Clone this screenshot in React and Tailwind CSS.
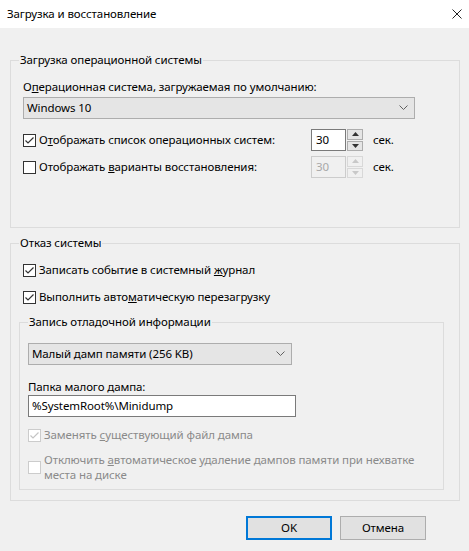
import React from 'react';

const font = { fontFamily: '"Noto Sans", "Segoe UI", sans-serif' };

function Check({ checked, disabled }) {
  const c = disabled ? '#c4c4c4' : '#333333';
  return (
    <span
      className={`w-[13px] h-[13px] shrink-0 border bg-white flex items-center justify-center ${
        disabled ? 'border-[#cccccc]' : 'border-[#333333]'
      }`}
    >
      {checked && (
        <svg width="11" height="11" viewBox="0 0 11 11">
          <polyline points="1.5,5.5 4,8 9.5,2.5" fill="none" stroke={c} strokeWidth="1.2" />
        </svg>
      )}
    </span>
  );
}

function CheckRow({ checked, disabled, children }) {
  return (
    <div className={`flex items-center h-[16px] ${disabled ? 'text-[#8a8a8a]' : ''}`}>
      <Check checked={checked} disabled={disabled} />
      <span className="ml-[3px] leading-[16px] whitespace-nowrap">{children}</span>
    </div>
  );
}

function Combo({ value, width }) {
  return (
    <div
      className={`${width} h-[22px] bg-[#e5e5e5] border border-[#adadad] flex items-center justify-between pl-[3px] pr-[6px]`}
    >
      <span>{value}</span>
      <svg width="9" height="6" viewBox="0 0 9 6">
        <polyline points="0.5,0.5 4.5,4.5 8.5,0.5" fill="none" stroke="#606060" strokeWidth="1" />
      </svg>
    </div>
  );
}

function Spin({ disabled }) {
  const arrow = disabled ? '#c8c8c8' : '#333333';
  const btn = disabled ? 'border-[#d8d8d8] bg-[#f0f0f0]' : 'border-[#adadad] bg-[#e5e5e5]';
  return (
    <div className="flex items-center">
      <div
        className={`w-[35px] h-[22px] border flex items-center pl-[4px] ${
          disabled ? 'border-[#cccccc] text-[#a8a8a8] bg-[#f0f0f0]' : 'border-[#7a7a7a] bg-white'
        }`}
      >
        30
      </div>
      <div className="ml-[1px] w-[16px] h-[22px] flex flex-col gap-[1px]">
        <div className={`h-[10.5px] border flex items-center justify-center ${btn}`}>
          <svg width="7" height="4" viewBox="0 0 7 4">
            <polygon points="0,4 3.5,0 7,4" fill={arrow} />
          </svg>
        </div>
        <div className={`h-[10.5px] border flex items-center justify-center ${btn}`}>
          <svg width="7" height="4" viewBox="0 0 7 4">
            <polygon points="0,0 7,0 3.5,4" fill={arrow} />
          </svg>
        </div>
      </div>
      <span className="ml-[10px]">сек.</span>
    </div>
  );
}

export default function App() {
  return (
    <div
      className="w-[469px] h-[551px] bg-[#f0f0f0] text-[11.5px] tracking-[-0.1px] text-black flex flex-col"
      style={font}
    >
      <header className="h-[28px] shrink-0 bg-white flex items-center justify-between pl-[7px] pr-[7px]">
        <span>Загрузка и восстановление</span>
        <svg width="10" height="10" viewBox="0 0 10 10">
          <path d="M0.5 0.5 L9.5 9.5 M9.5 0.5 L0.5 9.5" stroke="#222" strokeWidth="1" />
        </svg>
      </header>

      <div className="pl-[10px] pr-[9px] pt-[24px]">
        <fieldset className="border border-[#dcdcdc] pl-[12px] pr-[44px] pb-[49px]">
          <legend className="-ml-[4px] px-[1px] leading-[16px]">Загрузка операционной системы</legend>
          <div className="mt-[11px] leading-[16px]">
            О<u>п</u>ерационная система, загружаемая по умолчанию:
          </div>
          <div className="mt-[2px]">
            <Combo value="Windows 10" width="w-[392px]" />
          </div>
          <div className="mt-[10px] flex items-center">
            <div className="w-[288px]">
              <CheckRow checked>
                О<u>т</u>ображать список операционных систем:
              </CheckRow>
            </div>
            <Spin />
          </div>
          <div className="mt-[5px] flex items-center">
            <div className="w-[288px]">
              <CheckRow>
                Отображать <u>в</u>арианты восстановления:
              </CheckRow>
            </div>
            <Spin disabled />
          </div>
        </fieldset>

        <fieldset className="mt-[7px] border border-[#dcdcdc] pl-[8px] pr-[15px] pb-[10px]">
          <legend className="px-[1px] leading-[16px]">Отказ системы</legend>
          <div className="pl-[4px] mt-[11px]">
            <CheckRow checked>
              Записать событие в системный <u>ж</u>урнал
            </CheckRow>
          </div>
          <div className="pl-[4px] mt-[11px]">
            <CheckRow checked>
              Выполнить авто<u>м</u>атическую перезагрузку
            </CheckRow>
          </div>

          <fieldset className="mt-[9px] border border-[#dcdcdc] pl-[8px] pr-[8px] pb-[7px]">
            <legend className="px-[1px] leading-[16px]">Запись отладочной информации</legend>
            <div className="mt-[13px]">
              <Combo value="Малый дамп памяти (256 KB)" width="w-[264px]" />
            </div>
            <div className="mt-[14px] leading-[16px]">Папка малого дампа:</div>
            <div className="w-[268px] h-[22px] bg-white border border-[#7a7a7a] flex items-center pl-[3px]">
              %SystemRoot%\Minidump
            </div>
            <div className="mt-[10px]">
              <CheckRow checked disabled>
                Заменять <u>с</u>уществующий файл дампа
              </CheckRow>
            </div>
            <div className="mt-[9px] flex items-center text-[#8a8a8a]">
              <Check disabled />
              <span className="ml-[3px] leading-[15px] whitespace-nowrap">
                Отключить <u>а</u>втоматическое удаление дампов памяти при нехватке
                <br />
                места на диске
              </span>
            </div>
          </fieldset>
        </fieldset>
      </div>

      <div className="mt-[15px] flex justify-end gap-[8px] pr-[43px]">
        <button className="w-[86px] h-[24px] bg-[#e1e1e1] border-2 border-[#0078d7]">OK</button>
        <button className="w-[86px] h-[24px] bg-[#e1e1e1] border border-[#adadad]">Отмена</button>
      </div>
    </div>
  );
}
